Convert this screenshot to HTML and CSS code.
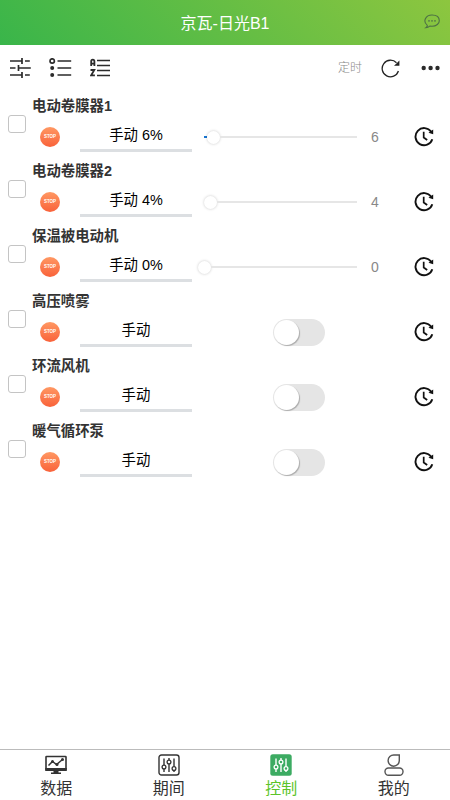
FILE: index.html
```
<!DOCTYPE html>
<html lang="zh-CN">
<head>
<meta charset="utf-8">
<title>京瓦-日光B1</title>
<link rel="stylesheet" href="styles.css">
</head>
<body>
<svg class="defs" width="0" height="0">
  <symbol id="clock" viewBox="0 0 20 20">
    <path d="M17.200 4.800A8.600 8.600 0 1 0 18.300 12.300" fill="none" stroke="#111" stroke-width="1.900"/>
    <path d="M19.200 2.500V7.300L14.500 5.800Z" fill="#111"/>
    <path d="M9.700 4.800V10.500L13.200 13" fill="none" stroke="#111" stroke-width="1.700"/>
  </symbol>
  <symbol id="faders" viewBox="0 0 22 22">
    <path d="M6 4.500V11M6 15V18M11 4V6M11 10V18M16 4.500V12.500M16 16.500V18" stroke="currentColor" stroke-width="1.4"/>
    <g fill="none" stroke="currentColor" stroke-width="1.3"><circle cx="6" cy="13" r="1.900"/><circle cx="11" cy="8" r="1.900"/><circle cx="16" cy="14.500" r="1.900"/></g>
  </symbol>
</svg>
<div class="app">
  <header class="header">
    <span></span>
    <h1>京瓦-日光B1</h1>
    <svg class="chat" width="16" height="15" viewBox="0 0 16 15">
      <path d="M3.300 11.400C-1.500 7.500 1.500 1 8 1S15.300 4 15.300 6.700S12.500 12.300 8 12.300L5.800 12.100C4.500 13.200 3.300 13.600 1.900 13.600Q3.300 12.700 3.300 11.400Z" fill="none" stroke="#4d7045" stroke-width="1.100"/>
      <g fill="#4d7045"><circle cx="5" cy="6.900" r=".8"/><circle cx="8" cy="6.900" r=".8"/><circle cx="11" cy="6.900" r=".8"/></g>
    </svg>
  </header>
  <div class="toolbar">
    <svg width="21" height="20" viewBox="0 0 21 20"><path d="M0 3H12M15 3H19.800M12 0V6M0 10H5.500M8.500 10H20.800M8.500 7V13M0 17H12M15 17H19.800M12 14V20" stroke="#2b2b2b" stroke-width="1.700"/></svg>
    <svg width="23" height="20" viewBox="0 0 23 20"><path d="M8.500 3H22.200M8.500 10H22.200M8.500 17H22.200" stroke="#2b2b2b" stroke-width="1.700"/><circle cx="3.200" cy="3" r="2.200" fill="none" stroke="#2b2b2b" stroke-width="1.700"/><g fill="#2b2b2b"><circle cx="3.200" cy="10" r="2"/><circle cx="3.200" cy="17" r="2"/></g></svg>
    <svg width="20" height="20" viewBox="0 0 20 20"><path d="M7 2.500H20M7 7.500H20M7 12.500H20M7 17.500H20" stroke="#2b2b2b" stroke-width="1.600"/><path d="M1.200 8V3.500Q1.200 1.700 2.800 1.700T4.400 3.500V8M1.200 5.700H4.400M.5 12H4.300L1.200 17.300H4.900" fill="none" stroke="#2b2b2b" stroke-width="1.800"/></svg>
    <span class="timing">定时</span>
    <svg width="19" height="19" viewBox="0 0 19 19"><path d="M15.500 3.800A8.300 8.300 0 1 0 17.400 12" fill="none" stroke="#222" stroke-width="1.300"/><path d="M18.400 1.500V6.700H13L15.200 4.800Z" fill="#222"/></svg>
    <svg width="19" height="6" viewBox="0 0 19 6"><g fill="#2b2b2b"><circle cx="2.700" cy="3" r="2.200"/><circle cx="9.600" cy="3" r="2.200"/><circle cx="16.500" cy="3" r="2.200"/></g></svg>
  </div>
  <main class="list">
    <section class="device">
      <span class="check"></span>
      <h2>电动卷膜器1</h2>
      <div class="controls">
        <span class="stop">STOP</span>
        <span class="mode">手动 6%</span>
        <div class="slider"><i class="fill"></i><i class="thumb"></i><i class="rest"></i></div>
        <span class="value">6</span>
        <svg class="clock"><use href="#clock"/></svg>
      </div>
    </section>
    <section class="device">
      <span class="check"></span>
      <h2>电动卷膜器2</h2>
      <div class="controls">
        <span class="stop">STOP</span>
        <span class="mode">手动 4%</span>
        <div class="slider"><i class="thumb"></i><i class="rest"></i></div>
        <span class="value">4</span>
        <svg class="clock"><use href="#clock"/></svg>
      </div>
    </section>
    <section class="device">
      <span class="check"></span>
      <h2>保温被电动机</h2>
      <div class="controls">
        <span class="stop">STOP</span>
        <span class="mode">手动 0%</span>
        <div class="slider"><i class="thumb zero"></i><i class="rest"></i></div>
        <span class="value">0</span>
        <svg class="clock"><use href="#clock"/></svg>
      </div>
    </section>
    <section class="device">
      <span class="check"></span>
      <h2>高压喷雾</h2>
      <div class="controls">
        <span class="stop">STOP</span>
        <span class="mode">手动</span>
        <span class="switch"><i class="knob"></i></span>
        <svg class="clock"><use href="#clock"/></svg>
      </div>
    </section>
    <section class="device">
      <span class="check"></span>
      <h2>环流风机</h2>
      <div class="controls">
        <span class="stop">STOP</span>
        <span class="mode">手动</span>
        <span class="switch"><i class="knob"></i></span>
        <svg class="clock"><use href="#clock"/></svg>
      </div>
    </section>
    <section class="device">
      <span class="check"></span>
      <h2>暖气循环泵</h2>
      <div class="controls">
        <span class="stop">STOP</span>
        <span class="mode">手动</span>
        <span class="switch"><i class="knob"></i></span>
        <svg class="clock"><use href="#clock"/></svg>
      </div>
    </section>
  </main>
  <nav class="tabs">
    <a class="tab">
      <svg width="22" height="22" viewBox="0 0 22 22"><rect x="1" y="2.500" width="20" height="13" rx=".6" fill="none" stroke="#333" stroke-width="1.600"/><path d="M.2 14H21.800V17H.2ZM8.500 17H13.500V18.500H16V20H6V18.500H8.500Z" fill="#333"/><path d="M3.500 11.500L7.500 7.500L11.500 10.500L17.500 5.500" fill="none" stroke="#333" stroke-width="1.500"/><g fill="#333"><circle cx="7.500" cy="7.500" r="1.500"/><circle cx="12" cy="10.500" r="1.500"/><circle cx="17.500" cy="5.500" r="1.500"/></g></svg>
      <span>数据</span>
    </a>
    <a class="tab">
      <svg width="22" height="22" viewBox="0 0 22 22"><rect x="1" y="1" width="20" height="20" rx="2.500" fill="none" stroke="currentColor" stroke-width="1.400"/><use href="#faders"/></svg>
      <span>期间</span>
    </a>
    <a class="tab active">
      <svg width="22" height="22" viewBox="0 0 22 22"><rect x=".3" y=".3" width="21.400" height="21.400" rx="2.500" fill="#3cab62"/><use class="light" href="#faders"/></svg>
      <span>控制</span>
    </a>
    <a class="tab">
      <svg width="22" height="22" viewBox="0 0 22 22"><path d="M16.300 1H10.800A5.600 5.600 0 1 0 16.300 6.600Z" fill="none" stroke="#555" stroke-width="1.400"/><rect x="2" y="14" width="18" height="7.200" rx="3.500" fill="none" stroke="#555" stroke-width="1.400"/></svg>
      <span>我的</span>
    </a>
  </nav>
</div>
</body>
</html>
```
FILE: styles.css
```
* { box-sizing: border-box; }
body {
  margin: 0;
  font-family: "Liberation Sans", "Noto Sans CJK SC", sans-serif;
  color: #333;
  background: #fff;
}
.defs { display: none; }
.app { display: flex; flex-direction: column; height: 800px; width: 450px; }
.header {
  height: 45px;
  flex: none;
  display: grid;
  grid-template-columns: 26px 1fr 26px;
  align-items: center;
  background: linear-gradient(45deg, #39b54a, #8dc63f);
}
.header h1 {
  margin: 0;
  padding-top: 3px;
  font-size: 16px;
  line-height: 24px;
  font-weight: 400;
  text-align: center;
  color: #fff;
}
.chat { margin-top: -2px; }
.toolbar {
  height: 50px;
  flex: none;
  display: flex;
  align-items: center;
  padding: 0 10px 4px;
}
.toolbar svg + svg { margin-left: 18px; }
.toolbar .timing {
  margin: 0 19px 0 auto;
  font-size: 12px;
  line-height: 18px;
  font-weight: 300;
  color: #888;
}
.toolbar .timing + svg + svg { margin: 0 0 1px 21px; }
.list { flex: 1; }
.device {
  height: 65px;
  display: grid;
  grid-template-columns: 32px 1fr;
  grid-template-rows: 20px 45px;
}
.check {
  grid-row: 1 / 3;
  width: 18px;
  height: 18px;
  margin: 20px 0 0 8px;
  border: 1px solid #c4c4c4;
  border-radius: 3px;
}
.device h2 {
  margin: 0;
  font-size: 14.4px;
  line-height: 22px;
  font-weight: bold;
  white-space: nowrap;
}
.controls {
  display: flex;
  align-items: center;
  height: 44px;
  padding-left: 8px;
}
.stop {
  width: 20px;
  height: 20px;
  border-radius: 50%;
  background: linear-gradient(#ff9863, #f9623a);
  color: #fff;
  font-size: 4.5px;
  font-weight: bold;
  line-height: 20px;
  text-align: center;
}
.mode {
  width: 112px;
  height: 32px;
  margin: 5px 12px 0 20px;
  border-bottom: 3px solid #dcdfe2;
  color: #000;
  font-size: 14.4px;
  line-height: 31px;
  text-align: center;
  align-self: flex-start;
}
.slider { width: 153px; height: 14px; display: flex; align-items: center; }
.fill { width: 3px; height: 2px; background: #1976d2; }
.thumb {
  width: 13px;
  height: 13px;
  flex: none;
  border-radius: 50%;
  background: #fff;
  box-shadow: 0 0 3px rgba(0, 0, 0, .22);
}
.zero { margin-left: -6px; }
.rest { flex: 1; height: 2px; background: #e6e6e6; }
.value { width: 36px; text-align: center; font-size: 14px; color: #888; }
.clock { width: 20px; height: 20px; margin-left: 21px; }
.switch {
  width: 52px;
  height: 27px;
  margin: 1px 89px 0 69px;
  padding: 1px;
  border-radius: 14px;
  background: #e5e5e5;
}
.switch + .clock { margin-left: 0; }
.knob {
  display: block;
  width: 25px;
  height: 25px;
  border-radius: 50%;
  background: #fff;
  box-shadow: 1px 1px 1px rgba(0, 0, 0, .25);
}
.tabs {
  height: 51px;
  flex: none;
  display: flex;
  border-top: 1px solid #bbb;
}
.tab {
  flex: 1;
  display: flex;
  flex-direction: column;
  align-items: center;
  padding-top: 4px;
  font-size: 16px;
  line-height: 25px;
  font-weight: 400;
  color: #333;
}
.tab svg { flex: none; }
.tab.active { color: #5cc429; }
.light { color: #fff; }
```
